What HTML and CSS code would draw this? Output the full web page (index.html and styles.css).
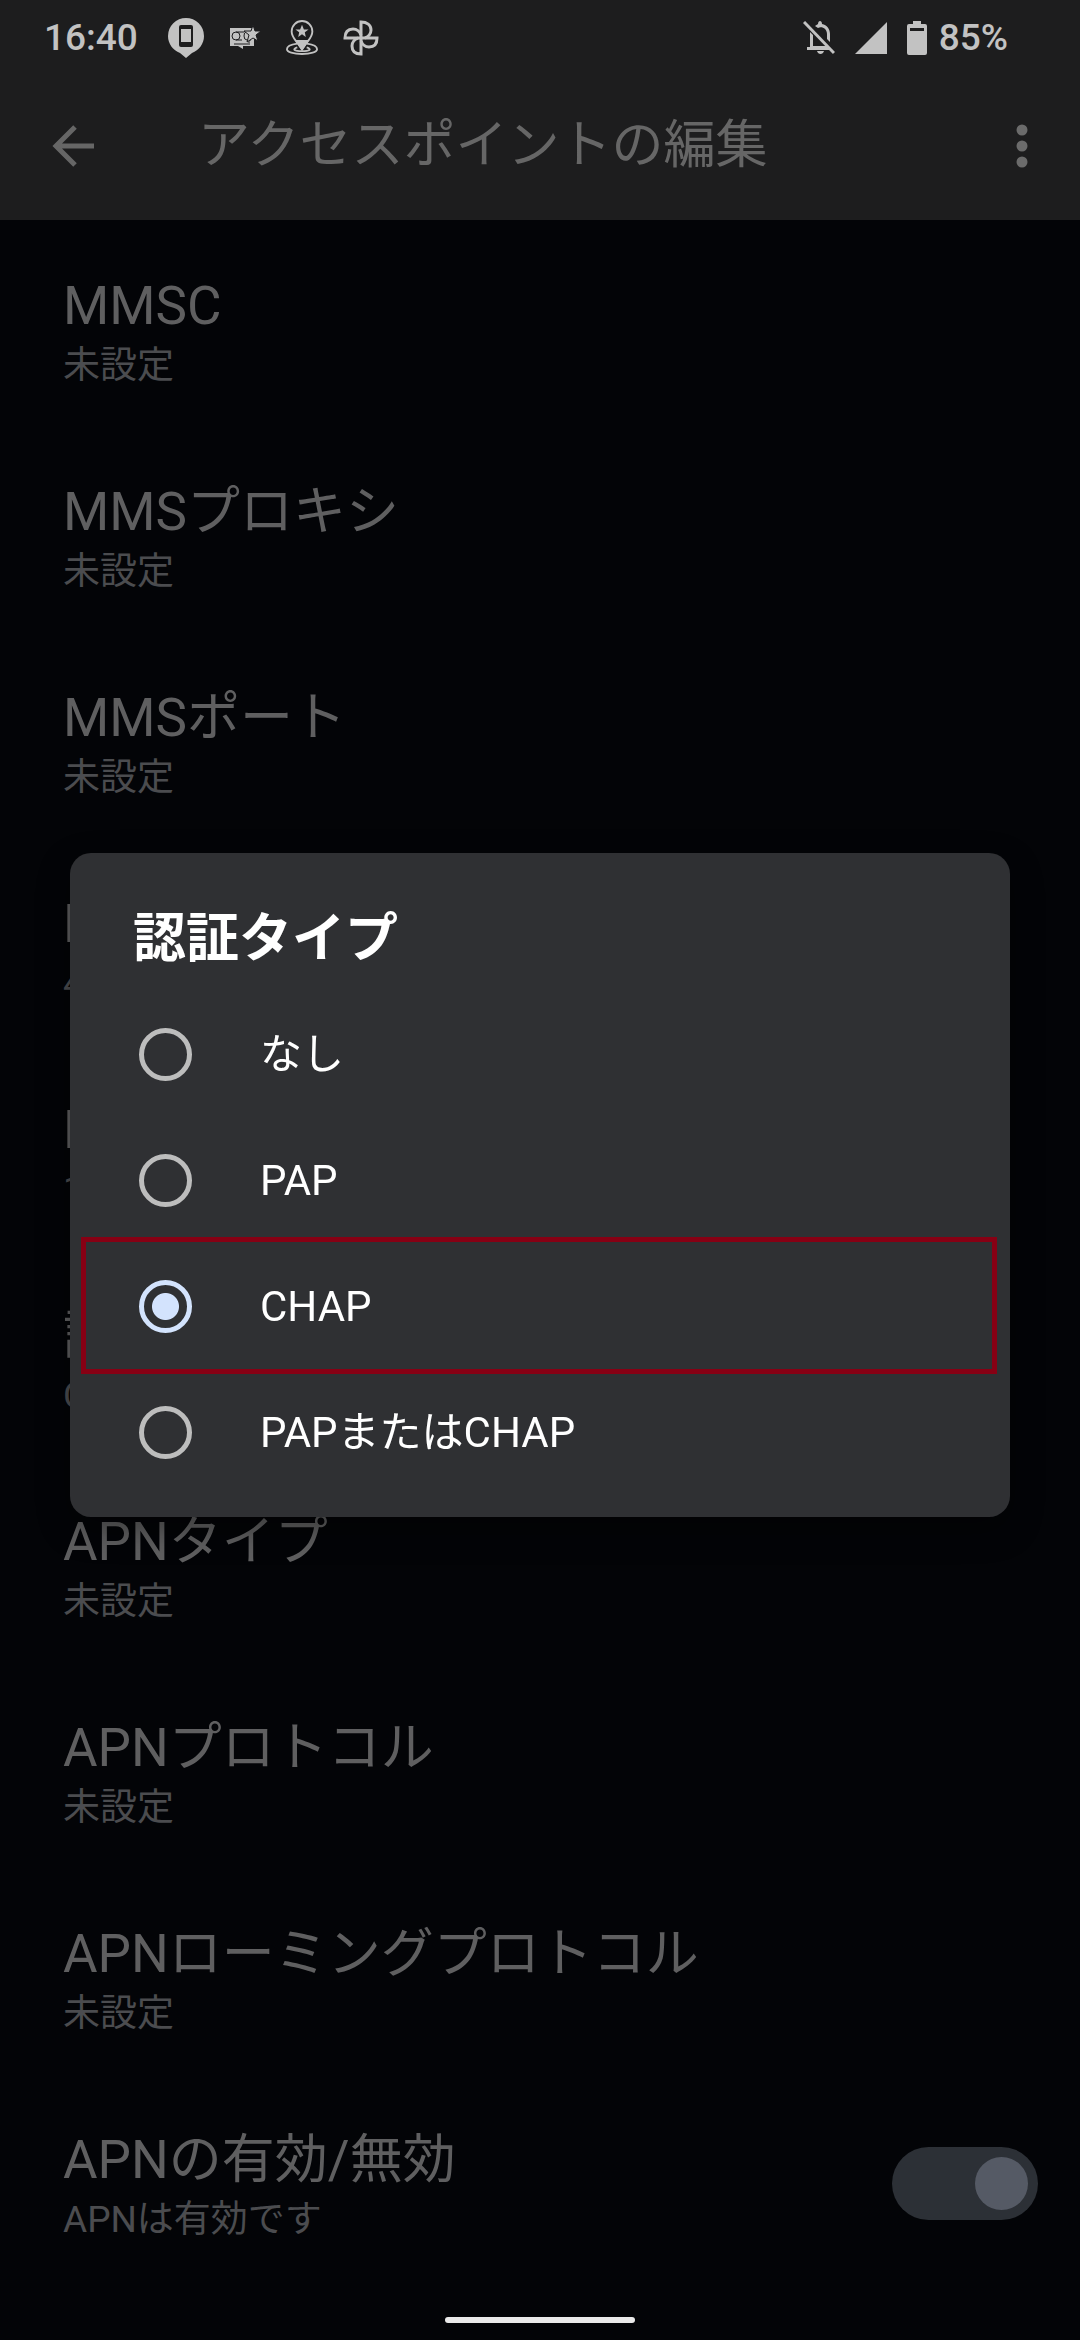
FILE: index.html
```html
<!DOCTYPE html>
<html lang="ja">
<head>
    <meta charset="UTF-8">
    <meta name="viewport" content="width=device-width, initial-scale=1.0">
    <title>アクセスポイントの編集</title>
    <link rel="stylesheet" href="styles.css">
</head>
<body>

    <header class="top">
        <div class="status-bar">
            <span class="clock">16:40</span>
            <div class="notifications">
                <svg width="36" height="40" viewBox="0 0 36 40">
                    <path fill="#c2c2c2" d="M18 0a18 18 0 0 1 18 18c0 8-5 14-12 17l-6 5-6-5C5 32 0 26 0 18A18 18 0 0 1 18 0z"/>
                    <rect x="11" y="7" width="14" height="22" rx="2" fill="#1d1d1e"/>
                    <rect x="13" y="11" width="10" height="13" fill="#c2c2c2"/>
                </svg>
                <svg width="32" height="26" viewBox="0 0 32 26">
                    <path fill="#c2c2c2" d="M1 3h24v18H14v3l-5-3H1z"/>
                    <g fill="none" stroke="#1d1d1e" stroke-width="1">
                        <circle cx="7" cy="11" r="4"/>
                        <path d="M7 7h8M7 15h6M20 7h-3q-2 0-2 4t3 4h4M5 19h14M20 15v5"/>
                    </g>
                    <path fill="#c2c2c2" stroke="#1d1d1e" stroke-width="1" d="M24 0l2 6h6l-5 4 2 6-5-3-6 4 2-7-5-4h7z"/>
                </svg>
                <svg width="32" height="36" viewBox="0 0 34 38" fill="none" stroke="#c2c2c2" stroke-width="2">
                    <path d="M12 25C4 26 1 28 1 31c0 3 7 5 16 5s16-2 16-5c0-3-3-5-11-6"/>
                    <path d="M12 29c-6 2-3 4 5 4s11-2 5-4"/>
                    <path d="M17 1a11 11 0 0 0-11 11c0 5 3 8 6 12l5 7 5-7c3-4 6-7 6-12A11 11 0 0 0 17 1z" fill="#1d1d1e"/>
                    <path d="M11 22h12l-6 9z" fill="#c2c2c2"/>
                    <path stroke="none" fill="#c2c2c2" d="M17 5l2 5h5l-4 3 1 5-4-3-4 3 1-5-4-3h5z"/>
                </svg>
                <svg width="36" height="36" viewBox="0 0 36 36" fill="none" stroke="#c2c2c2" stroke-width="3">
                    <path d="M18 18V2c6 0 10 3 10 8 0 4-3 7-6 8"/>
                    <path d="M18 18h16c0 6-3 9-8 9-4 0-7-3-8-6"/>
                    <path d="M18 18v16c-6 0-9-3-9-8 0-4 3-7 6-8"/>
                    <path d="M18 18H2c0-6 3-9 8-9 4 0 7 3 8 6"/>
                </svg>
            </div>
            <div class="system">
                <svg width="32" height="34" viewBox="0 0 32 34" fill="#c2c2c2">
                    <path d="M1 1l30 31" stroke="#c2c2c2" stroke-width="3"/>
                    <path d="M7 11l3 3v11h13l4 4H4v-3h3zM12 5l3-2c0-4 4-4 4 0 5 1 8 5 8 10v8l-3-3v-5c0-5-5-8-9-6zM14 30h7c-1 4-6 4-7 0z"/>
                </svg>
                <svg width="32" height="32" viewBox="0 0 32 32"><path fill="#c2c2c2" d="M32 0v32H0z"/></svg>
                <svg width="20" height="34" viewBox="0 0 20 34">
                    <path fill="#c2c2c2" d="M6 0h8v3h4q2 0 2 2v27q0 2-2 2H2q-2 0-2-2V5q0-2 2-2h4z"/>
                    <path fill="#1d1d1e" d="M3 7h14v3H3z"/>
                </svg>
                <span class="battery">85%</span>
            </div>
        </div>
        <div class="app-bar">
            <button class="icon-btn" aria-label="戻る">
                <svg width="42" height="42" viewBox="0 0 42 42" fill="none" stroke="#666" stroke-width="5">
                    <path d="M42 21H4M23 2L4 21l19 19"/>
                </svg>
            </button>
            <h1>アクセスポイントの編集</h1>
            <button class="icon-btn" aria-label="その他">
                <svg width="12" height="44" viewBox="0 0 12 44" fill="#6b6b6b">
                    <circle cx="6" cy="6" r="5.5"/>
                    <circle cx="6" cy="22" r="5.5"/>
                    <circle cx="6" cy="38" r="5.5"/>
                </svg>
            </button>
        </div>
    </header>

    <main class="settings">
        <div class="item"><h2>MMSC</h2><p>未設定</p></div>
        <div class="item"><h2>MMSプロキシ</h2><p>未設定</p></div>
        <div class="item"><h2>MMSポート</h2><p>未設定</p></div>
        <div class="item"><h2>MCC</h2><p>440</p></div>
        <div class="item"><h2>MNC</h2><p>10</p></div>
        <div class="item"><h2>認証タイプ</h2><p>CHAP</p></div>
        <div class="item"><h2>APNタイプ</h2><p>未設定</p></div>
        <div class="item"><h2>APNプロトコル</h2><p>未設定</p></div>
        <div class="item"><h2>APNローミングプロトコル</h2><p>未設定</p></div>
        <div class="item item-switch">
            <div>
                <h2><label for="apnEnabled">APNの有効/無効</label></h2>
                <p>APNは有効です</p>
            </div>
            <input type="checkbox" class="switch" id="apnEnabled" checked>
        </div>
    </main>

    <div class="overlay">
        <form class="dialog" role="dialog" aria-labelledby="dialogTitle">
            <h2 id="dialogTitle">認証タイプ</h2>
            <label class="option"><input type="radio" name="auth">なし</label>
            <label class="option"><input type="radio" name="auth">PAP</label>
            <label class="option marked"><input type="radio" name="auth" checked>CHAP</label>
            <label class="option"><input type="radio" name="auth">PAPまたはCHAP</label>
        </form>
    </div>

    <div class="nav-handle"></div>

</body>
</html>
```

FILE: styles.css
```css
* {
    box-sizing: border-box;
}

body {
    margin: 0;
    min-height: 100vh;
    background: #030407;
    font-family: Roboto, "Noto Sans CJK JP", sans-serif;
    color: #5f5f60;
}

h1, h2, p {
    margin: 0;
    font-weight: 400;
}

button {
    border: none;
    background: none;
    padding: 0;
    cursor: pointer;
}

svg {
    display: block;
    flex-shrink: 0;
}

.top {
    background: #1d1d1e;
}

.status-bar {
    display: flex;
    align-items: center;
    height: 75px;
    padding: 0 72px 0 44px;
    color: #c2c2c2;
    font-size: 37px;
    font-weight: 500;
}

.notifications {
    display: flex;
    align-items: center;
    gap: 25px;
    margin-left: 30px;
}

.system {
    display: flex;
    align-items: center;
    gap: 20px;
    margin-left: auto;
}

.battery {
    margin-left: -8px;
}

.app-bar {
    display: flex;
    align-items: center;
    height: 145px;
    padding: 0 52px 4px;
}

.app-bar h1 {
    flex: 1;
    margin-left: 104px;
    font-size: 52px;
    line-height: 62px;
    color: #666;
}

.item {
    padding: 43px 42px 31px 63px;
}

.item h2 {
    padding-top: 12px;
    font-size: 53px;
    line-height: 62px;
}

.item p {
    font-size: 37px;
    line-height: 58px;
    color: #4b4c4f;
}

.item-switch {
    display: flex;
    align-items: center;
    justify-content: space-between;
}

.switch {
    appearance: none;
    display: flex;
    align-items: center;
    justify-content: flex-end;
    width: 146px;
    height: 73px;
    margin: 0;
    padding: 10px;
    border-radius: 37px;
    background: #2c3036;
}

.switch::before {
    content: "";
    width: 53px;
    height: 53px;
    border-radius: 50%;
    background: #555a65;
}

.switch:not(:checked) {
    justify-content: flex-start;
}

.overlay {
    position: fixed;
    inset: 0;
    display: flex;
    align-items: center;
    padding: 75px 70px 46px;
}

.dialog {
    width: 100%;
    padding: 55px 0 21px;
    border-radius: 21px;
    background: #2f3033;
    color: #fff;
    box-shadow: 0 12px 32px rgba(0, 0, 0, 0.4);
}

.dialog h2 {
    padding: 0 63px 22px;
    font-size: 53px;
    font-weight: 700;
    line-height: 62px;
}

.option {
    position: relative;
    display: flex;
    align-items: center;
    gap: 68px;
    height: 126px;
    padding: 0 69px;
    font-size: 42px;
    line-height: 50px;
}

.option input {
    appearance: none;
    width: 53px;
    height: 53px;
    margin: 0;
    border: 5px solid #bdbdbd;
    border-radius: 50%;
}

.option input:checked {
    border-color: #d3e3fd;
    background: radial-gradient(circle, #d3e3fd 13px, transparent 14px);
}

/* red frame round the choice to make */
.marked::after {
    content: "";
    position: absolute;
    inset: -7px 13px -4px 11px;
    border: 5px solid #870014;
}

.nav-handle {
    position: fixed;
    bottom: 17px;
    left: 50%;
    width: 190px;
    height: 6px;
    margin-left: -95px;
    border-radius: 3px;
    background: #e9e9e9;
}
```
